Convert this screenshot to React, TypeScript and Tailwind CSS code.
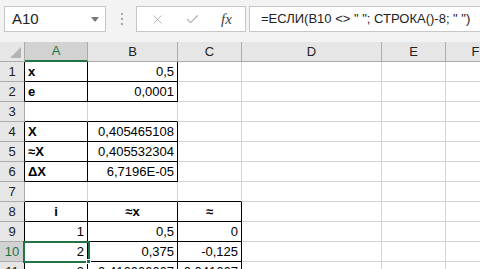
import { X, Check } from 'lucide-react'

type Cell = { v?: string; bold?: boolean; align?: 'left' | 'right' | 'center' }

const cols = [
  { key: 'A', w: 63 },
  { key: 'B', w: 90 },
  { key: 'C', w: 64 },
  { key: 'D', w: 140 },
  { key: 'E', w: 64 },
  { key: 'F', w: 60 },
]

// [A, B, C]
const data: Record<number, Cell[]> = {
  1: [{ v: 'x', bold: true }, { v: '0,5', align: 'right' }],
  2: [{ v: 'e', bold: true }, { v: '0,0001', align: 'right' }],
  4: [{ v: 'X', bold: true }, { v: '0,405465108', align: 'right' }],
  5: [{ v: '≈X', bold: true }, { v: '0,405532304', align: 'right' }],
  6: [{ v: 'ΔX', bold: true }, { v: '6,7196E-05', align: 'right' }],
  8: [
    { v: 'i', bold: true, align: 'center' },
    { v: '≈x', bold: true, align: 'center' },
    { v: '≈', bold: true, align: 'center' },
  ],
  9: [{ v: '1', align: 'right' }, { v: '0,5', align: 'right' }, { v: '0', align: 'right' }],
  10: [{ v: '2', align: 'right' }, { v: '0,375', align: 'right' }, { v: '-0,125', align: 'right' }],
  11: [{ v: '3', align: 'right' }, { v: '0,416666667', align: 'right' }, { v: '0,041667', align: 'right' }],
}

// bordered ranges: [rowFrom, rowTo, colFrom, colTo] (cols 0-based)
const blocks = [
  [1, 2, 0, 1],
  [4, 6, 0, 1],
  [8, 11, 0, 2],
]

const inBlock = (r: number, c: number) =>
  blocks.some(([r1, r2, c1, c2]) => r >= r1 && r <= r2 && c >= c1 && c <= c2)

const rows = [1, 2, 3, 4, 5, 6, 7, 8, 9, 10, 11]

function FormulaBar() {
  return (
    <div className="flex h-[42px] items-start bg-[#f3f3f3] pt-[6px]">
      <div className="ml-[4px] flex h-[26px] w-[102px] items-center justify-between border border-[#c6c6c6] bg-white pl-[7px] pr-[6px]">
        <span className="text-[15px] text-[#222]">A10</span>
        <svg width="8" height="5" viewBox="0 0 8 5">
          <path d="M0 0 L8 0 L4 5 Z" fill="#777" />
        </svg>
      </div>
      <div className="ml-[14px] flex h-[26px] w-[4px] flex-col items-center justify-center gap-[3px]">
        <span className="h-[2px] w-[2px] bg-[#a8a8a8]" />
        <span className="h-[2px] w-[2px] bg-[#a8a8a8]" />
        <span className="h-[2px] w-[2px] bg-[#a8a8a8]" />
      </div>
      <div className="ml-[12px] flex h-[26px] w-[110px] items-center border border-[#c6c6c6] bg-white">
        <X className="ml-[13px] h-[15px] w-[15px] text-[#b3b3b3]" strokeWidth={1.5} />
        <Check className="ml-[20px] h-[15px] w-[15px] text-[#b3b3b3]" strokeWidth={2} />
        <span className="ml-[21px] font-['Liberation_Serif',serif] text-[15px] italic text-[#444]">fx</span>
      </div>
      <div className="ml-[3px] flex h-[26px] min-w-0 flex-1 items-center overflow-hidden whitespace-nowrap border border-r-0 border-[#c6c6c6] bg-white pl-[11px]">
        <span className="text-[13px] text-[#222]">=ЕСЛИ(B10 &lt;&gt; " "; СТРОКА()-8; " ")</span>
      </div>
    </div>
  )
}

export default function App() {
  return (
    <div className="relative h-[269px] w-[480px] overflow-hidden bg-white font-['Liberation_Sans',Arial,sans-serif]">
      <FormulaBar />
      {/* column headers */}
      <div className="flex h-[20px]">
        <div className="relative w-[25px] shrink-0 border-b border-r border-[#ababab] bg-[#e6e6e6]">
          <svg className="absolute bottom-[3px] right-[3px]" width="11" height="11" viewBox="0 0 11 11">
            <path d="M11 0 L11 11 L0 11 Z" fill="#b4b4b4" />
          </svg>
        </div>
        {cols.map((c, i) => (
          <div
            key={c.key}
            style={{ width: c.w }}
            className={
              i === 0
                ? 'flex shrink-0 items-center justify-center border-b-2 border-r border-b-[#217346] border-r-[#ababab] bg-[#d2d2d2] text-[13px] text-[#217346]'
                : 'flex shrink-0 items-center justify-center border-b border-r border-[#ababab] bg-[#e6e6e6] text-[13px] text-[#222]'
            }
          >
            {c.key}
          </div>
        ))}
      </div>
      {/* rows */}
      {rows.map((r) => (
        <div key={r} className="flex h-[20px]">
          <div
            className={
              'flex w-[25px] shrink-0 items-center justify-center border-b border-r text-[13px] ' +
              (r === 10 ? 'bg-[#d2d2d2] text-[#217346] ' : 'bg-[#e6e6e6] text-[#222] ') +
              (inBlock(r, 0) ? 'border-b-[#ababab] border-r-black' : 'border-[#ababab]')
            }
          >
            {r}
          </div>
          {cols.map((c, ci) => {
            const cell = data[r]?.[ci]
            const rightBlack = inBlock(r, ci) || inBlock(r, ci + 1)
            const bottomBlack = inBlock(r, ci) || inBlock(r + 1, ci)
            const align =
              cell?.align === 'right' ? 'justify-end' : cell?.align === 'center' ? 'justify-center' : 'justify-start'
            return (
              <div
                key={c.key}
                style={{ width: c.w }}
                className={
                  'flex shrink-0 items-center overflow-hidden whitespace-nowrap border-b border-r px-[3px] text-[13px] text-black ' +
                  align +
                  ' ' +
                  (rightBlack ? 'border-r-black ' : 'border-r-[#d4d4d4] ') +
                  (bottomBlack ? 'border-b-black ' : 'border-b-[#d4d4d4] ') +
                  (cell?.bold ? 'font-bold' : '')
                }
              >
                {cell?.v}
              </div>
            )
          })}
        </div>
      ))}
      {/* selection A10 */}
      <div className="pointer-events-none absolute left-[23px] top-[241px] h-[22px] w-[67px] border-2 border-[#217346]" />
      <div className="pointer-events-none absolute left-[86px] top-[259px] h-[5px] w-[5px] border border-white bg-[#217346]" />
    </div>
  )
}
